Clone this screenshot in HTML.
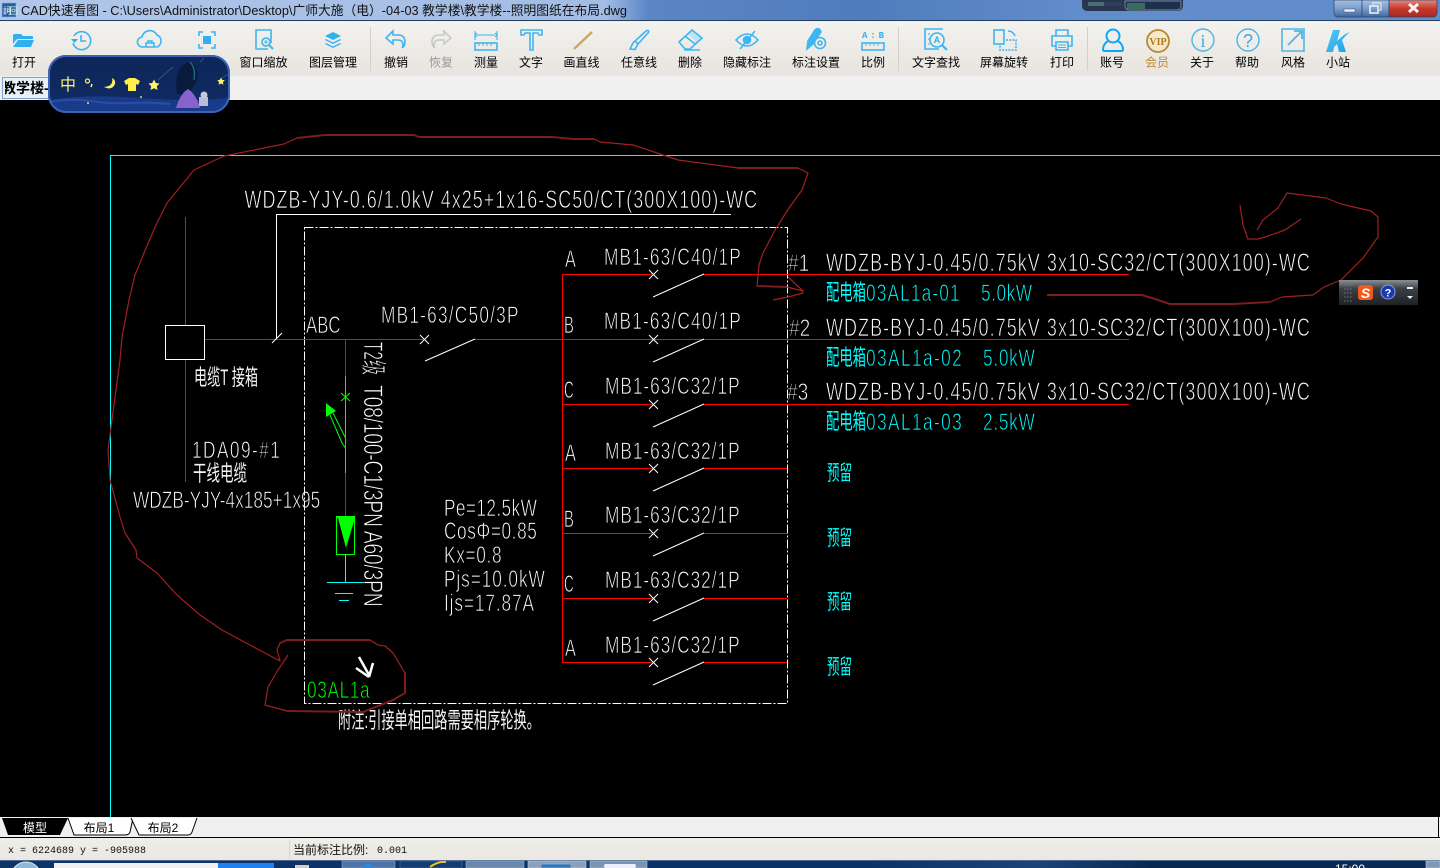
<!DOCTYPE html>
<html lang="zh"><head><meta charset="utf-8"><title>CAD快速看图</title>
<style>
html,body{margin:0;padding:0;background:#000;width:1440px;height:868px;overflow:hidden}
svg{display:block}
text{font-family:"Liberation Sans","Noto Sans CJK SC",sans-serif}
.l{font-size:12px;text-anchor:middle;fill:#000}
.c{font-size:24px;fill:#fff;stroke:#000;stroke-width:.75}
.t{font-size:25px}
.b{fill:#0ff}
.z{font-size:22px;fill:#f4f4f4}
.y{font-size:21px;fill:#0ff}
.i{fill:none;stroke:#3db5f0;stroke-width:1.6}
.f{fill:#2fb0f0;stroke:none}
.w{fill:none;stroke:#fff;stroke-width:1}
.r{fill:none;stroke:#f00;stroke-width:1}
.h{fill:none;stroke:#a02020;stroke-width:1.2;stroke-linejoin:round}
.h2{fill:none;stroke:#7c1c1c;stroke-width:2;stroke-linejoin:round}
</style></head><body>
<svg width="1440" height="868" viewBox="0 0 1440 868" xmlns="http://www.w3.org/2000/svg">
<defs>
<linearGradient id="tb" x1="0" y1="0" x2="0" y2="1"><stop offset="0" stop-color="#f3f2ee"/><stop offset="1" stop-color="#e8e4df"/></linearGradient>
<linearGradient id="st" x1="0" y1="0" x2="0" y2="1"><stop offset="0" stop-color="#efeee9"/><stop offset="1" stop-color="#ebe7e3"/></linearGradient>
<linearGradient id="title" x1="0" y1="0" x2="1" y2="0"><stop offset="0" stop-color="#b0c6ea"/><stop offset=".42" stop-color="#a3bce4"/><stop offset=".45" stop-color="#5b86c6"/><stop offset=".6" stop-color="#4f7cbc"/><stop offset=".75" stop-color="#628dcb"/><stop offset="1" stop-color="#5f8ccb"/></linearGradient>
<linearGradient id="task" x1="0" y1="0" x2="1" y2="0"><stop offset="0" stop-color="#0c3468"/><stop offset=".6" stop-color="#0a3268"/><stop offset=".72" stop-color="#1c4478"/><stop offset=".8" stop-color="#08284f"/><stop offset="1" stop-color="#0a2a55"/></linearGradient>
<linearGradient id="close" x1="0" y1="0" x2="0" y2="1"><stop offset="0" stop-color="#e08a80"/><stop offset=".5" stop-color="#c8382c"/><stop offset="1" stop-color="#a82a20"/></linearGradient>
<linearGradient id="btn" x1="0" y1="0" x2="0" y2="1"><stop offset="0" stop-color="#a8c0e0"/><stop offset=".5" stop-color="#7c9ccc"/><stop offset="1" stop-color="#40689c"/></linearGradient>
<linearGradient id="sky" x1="0" y1="0" x2="0" y2="1"><stop offset="0" stop-color="#0e2658"/><stop offset=".7" stop-color="#0f2a60"/><stop offset="1" stop-color="#122f6c"/></linearGradient>
<linearGradient id="sg" x1="0" y1="0" x2="0" y2="1"><stop offset="0" stop-color="#8a9096"/><stop offset=".35" stop-color="#3a4046"/><stop offset="1" stop-color="#1e2226"/></linearGradient>
<linearGradient id="kk" x1="0" y1="0" x2="1" y2="1"><stop offset="0" stop-color="#55c8f5"/><stop offset="1" stop-color="#1a9fe5"/></linearGradient>
<clipPath id="tabclip"><rect x="5" y="77" width="44" height="23"/></clipPath>
<clipPath id="skin"><rect x="48" y="55" width="182" height="58" rx="18"/></clipPath>
</defs>

<!-- canvas -->
<rect width="1440" height="868" fill="#000"/>

<!-- title bar -->
<rect x="0" y="0" width="1440" height="20" fill="url(#title)"/>
<rect x="0" y="20" width="1440" height="1" fill="#26405f"/>
<rect x="0" y="21" width="1440" height="1" fill="#e8eef6"/>
<rect x="2" y="3" width="14" height="14" fill="#2b5c9c" stroke="#8fb0d8" stroke-width=".6"/>
<text x="3" y="14" font-size="9" fill="#fff">訶</text><text x="9" y="14" font-size="9" fill="#cfe">回</text>
<text x="21" y="15" font-size="13" fill="#111" textLength="606" lengthAdjust="spacingAndGlyphs">CAD快速看图 - C:\Users\Administrator\Desktop\广师大施（电）-04-03 教学楼\教学楼--照明图纸在布局.dwg</text>
<!-- tray widget -->
<path d="M1082 0H1183V6a5 5 0 0 1-5 5H1087a5 5 0 0 1-5-5z" fill="#28364f"/>
<path d="M1125 1h56v5a4 4 0 0 1-4 4h-48a4 4 0 0 1-4-4z" fill="#1e3050" stroke="#8aa4c8" stroke-width=".7"/>
<path d="M1089 2v4M1091 2v4M1093 2v4M1095 2v4M1097 2v4M1099 2v4M1101 2v4M1103 2v4" stroke="#7fd8c8" stroke-width=".7"/>
<path d="M1105 2v4M1107 2v4M1109 2v4M1111 2v4M1113 2v4M1115 2v4M1117 2v4M1119 2v4M1121 2v4" stroke="#3f506c" stroke-width=".7"/>
<path d="M1128 3v6M1130 3v6M1132 3v6M1134 3v6M1136 3v6M1138 3v6M1140 3v6M1142 3v6M1144 3v6" stroke="#6fdc78" stroke-width=".7"/>
<!-- window buttons -->
<path d="M1334 0H1362V17H1338a4 4 0 0 1-4-4z" fill="url(#btn)" stroke="#2c4468" stroke-width=".7"/>
<rect x="1362" y="0" width="27" height="17" fill="url(#btn)" stroke="#2c4468" stroke-width=".7"/>
<path d="M1389 0H1437V13a4 4 0 0 1-4 4H1389z" fill="url(#close)" stroke="#2c4468" stroke-width=".7"/>
<rect x="1344" y="9" width="11" height="3" fill="#eef" stroke="#44556f" stroke-width=".5"/>
<rect x="1370" y="6" width="8" height="7" fill="none" stroke="#e8eef8" stroke-width="1.6"/><path d="M1373 5V3h8v7h-2" fill="none" stroke="#dde6f4" stroke-width="1.2"/>
<path d="M1409 4l9 8M1418 4l-9 8" stroke="#f6f0ee" stroke-width="3"/>

<!-- toolbar -->
<rect x="0" y="22" width="1440" height="54" fill="url(#tb)"/>
<rect x="0" y="76" width="1440" height="24" fill="#f0f0f0"/>
<path d="M370.500 27V71M898.500 27V71M1087.500 27V71" stroke="#d2d0cc"/>

<!-- labels -->
<g>
<text class="l" x="24" y="66.500">打开</text>
<text class="l" x="263.500" y="66.500">窗口缩放</text>
<text class="l" x="333" y="66.500">图层管理</text>
<text class="l" x="396" y="66.500">撤销</text>
<text class="l" x="441" y="66.500" style="fill:#999">恢复</text>
<text class="l" x="486" y="66.500">测量</text>
<text class="l" x="531" y="66.500">文字</text>
<text class="l" x="581.500" y="66.500">画直线</text>
<text class="l" x="639" y="66.500">任意线</text>
<text class="l" x="690" y="66.500">删除</text>
<text class="l" x="747" y="66.500">隐藏标注</text>
<text class="l" x="816" y="66.500">标注设置</text>
<text class="l" x="873" y="66.500">比例</text>
<text class="l" x="936" y="66.500">文字查找</text>
<text class="l" x="1004" y="66.500">屏幕旋转</text>
<text class="l" x="1062" y="66.500">打印</text>
<text class="l" x="1112" y="66.500">账号</text>
<text class="l" x="1157" y="66.500" style="fill:#c08a2c">会员</text>
<text class="l" x="1202" y="66.500">关于</text>
<text class="l" x="1247" y="66.500">帮助</text>
<text class="l" x="1293" y="66.500">风格</text>
<text class="l" x="1338" y="66.500">小站</text>
</g>

<!-- icons -->
<path class="f" d="M13 36q0-2 2-2h6l2 2h9q1 0 1 1v2H18q-1 0-2 1l-3 4zM18 40h16l-3 7H13z"/>
<g class="i"><path d="M74 36a9 9 0 1 1-1 7"/><path d="M81 35v6h5"/></g><path class="f" d="M71 39h7l-3.500 4z"/>
<g class="i" stroke-width="1.8"><path d="M145 47h-2a5 5 0 0 1-1-10 8 8 0 0 1 15-2 6.500 6.500 0 0 1 0 12h-2"/><path d="M146 47v-4h8v4zM148 43v-2h4v2"/></g>
<g class="i"><path d="M199 36v-4h4M211 32h4v4M215 44v4h-4M203 48h-4v-4"/></g><rect x="203" y="36" width="8" height="8" fill="#2fb0f0"/>
<g class="i"><path d="M271 43V30h-15v19h12"/><circle cx="266" cy="42" r="4"/><path d="M269 45l4 4" stroke-width="2"/><path d="M264 42h4M266 40v4" stroke-width="1"/></g>
<path class="f" d="M333 32l8 4-8 4-8-4z"/><path class="f" d="M326 39l7 3.500 7-3.500 1 1-8 4-8-4z"/><path class="f" d="M326 43l7 3.500 7-3.500 1 1-8 4-8-4z"/>
<g class="i"><path d="M393 31l-7 7 7 6v-4h5q5 0 5 5 0 2-1 3 3-2 3-6 0-7-7-7h-5z"/></g>
<g fill="none" stroke="#c8c8c8" stroke-width="1.6"><path d="M444 31l7 7-7 6v-4h-5q-5 0-5 5 0 2 1 3-3-2-3-6 0-7 7-7h5z"/></g>
<g class="i" stroke-width="1.3"><path d="M475 31v9M497 31v9M477 35h18M495 33l2 2-2 2M477 33l-2 2 2 2" stroke-width="1.1"/><rect x="475" y="43" width="22" height="7"/><path d="M479 43v3M483 43v3M487 43v3M491 43v3" stroke-width="1"/></g>
<g class="i"><path d="M521 35v-5h21v5h-3l-1-2h-5v17h-3V33h-5l-1 2z"/></g>
<path d="M574 49l18-17" stroke="#c9a860" stroke-width="2.4"/>
<g class="i"><path d="M638 44l10-11q1.500-2 0-2.500-1-.5-2.500 1L635 41zM635 41l-2 2-3 6 5 .5 3-5.500"/></g>
<path d="M688 34l5-4 9 8-5 5z" fill="#bfe4f8"/>
<g class="i"><path d="M679 42l13-12 10 8-12 11h-5zM685 36l10 8M684 50h16"/></g>
<g class="i" stroke-width="1.8"><path d="M736 40q11-12 22 0-11 12-22 0z"/><circle cx="747" cy="40" r="3.500" fill="#3db5f0"/><path d="M740 49l15-18"/></g>
<g class="i"><path d="M815 30q3-3 5 0l1 2-8 12-6 5 1-8z" fill="#3db5f0"/><circle cx="820" cy="43" r="5.500" fill="#f0eeea"/><circle cx="820" cy="43" r="2"/></g>
<text x="862" y="38" font-size="9" font-weight="700" fill="#2fb0f0" textLength="22" style="font-family:'Liberation Mono',monospace">A:B</text>
<g class="i" stroke-width="1.2"><rect x="862" y="43" width="22" height="7"/><path d="M866 43v3M870 43v3M874 43v3M878 43v3" stroke-width="1"/></g>
<g class="i"><path d="M943 29H925v20h14"/><circle cx="937" cy="40" r="7"/><path d="M942 45l5 5" stroke-width="2.2"/><path d="M928 34h2M928 39h2M928 44h2" stroke-width="1"/></g>
<text x="937" y="43" font-size="9" font-weight="700" fill="#2fb0f0" text-anchor="middle">A</text>
<g class="i"><rect x="994" y="30" width="10" height="14"/><path d="M1006 40h10v10h-16v-5" stroke-dasharray="2 1.200"/><path d="M1008 31q5 0 7 5"/></g>
<g class="i" stroke-width="1.8"><path d="M1056 36v-6h12v6"/><path d="M1056 46h-4V36h20v10h-4"/><path d="M1056 42h12v8h-12z"/><path d="M1058 45h8M1058 47.500h8" stroke-width="1"/></g>
<g fill="none" stroke="#0aa8f8" stroke-width="2"><circle cx="1113" cy="36" r="6.500"/><path d="M1108 41q-5 3-5 9 0 1 2 1h16q2 0 2-1 0-6-5-9"/></g>
<circle cx="1158" cy="41" r="11" fill="#f4e8c8" stroke="#b5873a" stroke-width="1.8"/>
<text x="1158" y="45" font-size="10" font-weight="700" text-anchor="middle" fill="#b07a1c" style="font-family:'Liberation Serif',serif">VIP</text>
<circle cx="1203" cy="40" r="11" fill="none" stroke="#4fb5e6" stroke-width="1.4"/>
<text x="1203" y="47" font-size="18" text-anchor="middle" fill="#3aa8e0" style="font-family:'Liberation Serif',serif">i</text>
<circle cx="1248" cy="40" r="11" fill="none" stroke="#4fb5e6" stroke-width="1.4"/>
<text x="1248" y="47" font-size="18" text-anchor="middle" fill="#3aa8e0">?</text>
<g fill="none" stroke="#4fb5e6" stroke-width="1.6"><path d="M1293 29h11v22h-22V38"/><path d="M1282 38V29h11"/><path d="M1288 45l13-13M1294 31h8v8" stroke-width="1.800"/></g>
<path d="M1333 30h7l-3 11 7-6q3-2 6-3-4 3-8 8l4 12h-7l-2-8-3 3-1 5h-7z" fill="url(#kk)"/>

<!-- document tab -->
<rect x="2.500" y="77.500" width="46" height="21" fill="#e8f0f8" stroke="#7fa4d4"/>
<g clip-path="url(#tabclip)"><text x="2" y="93" font-size="14" font-weight="700" fill="#000">教学楼--照明</text></g>

<!-- CAD: text -->
<g>
<text class="c t" transform="translate(244.500 208) scale(.72 1)" textLength="712" lengthAdjust="spacing">WDZB-YJY-0.6/1.0kV 4x25+1x16-SC50/CT(300X100)-WC</text>

<text class="c t" transform="translate(826 271) scale(.72 1)" textLength="672" lengthAdjust="spacing">WDZB-BYJ-0.45/0.75kV 3x10-SC32/CT(300X100)-WC</text>
<text class="c t" transform="translate(826 336) scale(.72 1)" textLength="672" lengthAdjust="spacing">WDZB-BYJ-0.45/0.75kV 3x10-SC32/CT(300X100)-WC</text>
<text class="c t" transform="translate(826 400) scale(.72 1)" textLength="672" lengthAdjust="spacing">WDZB-BYJ-0.45/0.75kV 3x10-SC32/CT(300X100)-WC</text>
<text class="c" transform="translate(788 271) scale(.8 1)">#1</text>
<text class="c" transform="translate(789 336) scale(.8 1)">#2</text>
<text class="c" transform="translate(787 400) scale(.8 1)">#3</text>

<text class="y" x="826" y="300" textLength="40" lengthAdjust="spacingAndGlyphs" style="font-size:22px">配电箱</text>
<text class="c b" transform="translate(866 301) scale(.72 1)" textLength="130" lengthAdjust="spacing">03AL1a-01</text>
<text class="c b" transform="translate(981 301) scale(.72 1)" textLength="71" lengthAdjust="spacing">5.0kW</text>
<text class="y" x="826" y="365" textLength="40" lengthAdjust="spacingAndGlyphs" style="font-size:22px">配电箱</text>
<text class="c b" transform="translate(866 366) scale(.72 1)" textLength="133" lengthAdjust="spacing">03AL1a-02</text>
<text class="c b" transform="translate(983 366) scale(.72 1)" textLength="72" lengthAdjust="spacing">5.0kW</text>
<text class="y" x="826" y="429" textLength="40" lengthAdjust="spacingAndGlyphs" style="font-size:22px">配电箱</text>
<text class="c b" transform="translate(866 430) scale(.72 1)" textLength="133" lengthAdjust="spacing">03AL1a-03</text>
<text class="c b" transform="translate(983 430) scale(.72 1)" textLength="72" lengthAdjust="spacing">2.5kW</text>

<text class="y" x="827" y="480" textLength="25" lengthAdjust="spacingAndGlyphs">预留</text>
<text class="y" x="827" y="545" textLength="25" lengthAdjust="spacingAndGlyphs">预留</text>
<text class="y" x="827" y="609" textLength="25" lengthAdjust="spacingAndGlyphs">预留</text>
<text class="y" x="827" y="674" textLength="25" lengthAdjust="spacingAndGlyphs">预留</text>

<text class="c" transform="translate(604 265) scale(.72 1)" textLength="190" lengthAdjust="spacing">MB1-63/C40/1P</text>
<text class="c" transform="translate(604 329) scale(.72 1)" textLength="190" lengthAdjust="spacing">MB1-63/C40/1P</text>
<text class="c" transform="translate(605 394) scale(.72 1)" textLength="187" lengthAdjust="spacing">MB1-63/C32/1P</text>
<text class="c" transform="translate(605 459) scale(.72 1)" textLength="187" lengthAdjust="spacing">MB1-63/C32/1P</text>
<text class="c" transform="translate(605 523) scale(.72 1)" textLength="187" lengthAdjust="spacing">MB1-63/C32/1P</text>
<text class="c" transform="translate(605 588) scale(.72 1)" textLength="187" lengthAdjust="spacing">MB1-63/C32/1P</text>
<text class="c" transform="translate(605 653) scale(.72 1)" textLength="187" lengthAdjust="spacing">MB1-63/C32/1P</text>
<text class="c" transform="translate(565 267) scale(.68 1)">A</text>
<text class="c" transform="translate(564 333) scale(.62 1)">B</text>
<text class="c" transform="translate(564 398) scale(.56 1)">C</text>
<text class="c" transform="translate(565 461) scale(.68 1)">A</text>
<text class="c" transform="translate(564 527) scale(.62 1)">B</text>
<text class="c" transform="translate(564 592) scale(.56 1)">C</text>
<text class="c" transform="translate(565 656) scale(.68 1)">A</text>

<text class="c" transform="translate(306 333) scale(.7 1)">ABC</text>
<text class="c" transform="translate(381 323) scale(.72 1)" textLength="191" lengthAdjust="spacing">MB1-63/C50/3P</text>
<text class="z" x="194" y="385" textLength="64" lengthAdjust="spacingAndGlyphs">电缆T 接箱</text>
<text class="c" transform="translate(192 458) scale(.72 1)" textLength="122" lengthAdjust="spacing">1DA09-#1</text>
<text class="z" x="193" y="481" textLength="54" lengthAdjust="spacingAndGlyphs">干线电缆</text>
<text class="c" transform="translate(133 508) scale(.72 1)" textLength="260" lengthAdjust="spacing">WDZB-YJY-4x185+1x95</text>

<text class="c" transform="translate(364 342) rotate(90) scale(.72 1)" textLength="46" lengthAdjust="spacingAndGlyphs" style="font-size:27px">T2级</text>
<text class="c" transform="translate(364 385) rotate(90) scale(.72 1)" textLength="308" lengthAdjust="spacing" style="font-size:27px">T08/100-C1/3PN A60/3PN</text>

<text class="c" transform="translate(444 516) scale(.72 1)" textLength="129" lengthAdjust="spacing">Pe=12.5kW</text>
<text class="c" transform="translate(444 539) scale(.72 1)" textLength="129" lengthAdjust="spacing">CosΦ=0.85</text>
<text class="c" transform="translate(444 563) scale(.72 1)" textLength="80" lengthAdjust="spacing">Kx=0.8</text>
<text class="c" transform="translate(444 587) scale(.72 1)" textLength="140" lengthAdjust="spacing">Pjs=10.0kW</text>
<text class="c" transform="translate(444 611) scale(.72 1)" textLength="125" lengthAdjust="spacing">Ijs=17.87A</text>

<text class="c" transform="translate(307 698) scale(.72 1)" textLength="87" lengthAdjust="spacing" style="fill:#0f0">03AL1a</text>
<text class="z" x="338" y="728" textLength="202" lengthAdjust="spacingAndGlyphs">附注:引接单相回路需要相序轮换。</text>
</g>

<!-- CAD: lines -->
<path d="M110.500 817V155.500H1440" fill="none" stroke="#0ff"/>
<path d="M304.500 227.500H787.500V703.500H304.500Z" fill="none" stroke="#fff" stroke-dasharray="9 2 2 2"/>
<path class="r" style="stroke:#d01818" d="M185.500 217V325M185.500 360V482M205 339.500H424M475 339.500H1129M345.500 339.500V376"/>
<path class="r" d="M345.500 448V473M345.500 473V516"/>
<rect x="165.500" y="325.500" width="39" height="34" class="w"/>
<path class="w" d="M731 214.500H276.500V339M272 343l10-10M420 335l9 9M429 335l-9 9M425 361l50-22"/>
<path d="M345.500 376V473" stroke="#0f0" fill="none"/>
<path d="M341 393l9 8M350 393l-9 8" stroke="#0f0" fill="none"/>
<path d="M333 413l12.500 25M330 415l12 28 3.500 5" stroke="#0f0" fill="none"/>
<path d="M326 403v14l10-6z" fill="#0f0"/>
<rect x="336.500" y="516.500" width="18" height="38" fill="none" stroke="#0f0"/>
<path d="M336 516h19v2l-9 30-8-30h-2z" fill="#0f0"/>
<path d="M345.500 554V582M327 582.500H364M335 593.500H353M339 600.500H349" stroke="#0ff" fill="none"/>

<path class="r" d="M562.500 274V663"/>
<path class="r" d="M563 274.500H652M704 274.500H1129M563 404.500H652M704 404.500H1129M563 468.500H652M704 468.500H787M563 598.500H652M704 598.500H787M563 662.500H652M704 662.500H787"/>
<path class="r" style="stroke:#d01818" d="M563 533.500H652M704 533.500H787"/>
<path class="w" d="M649 270l9 9M658 270l-9 9M653 297l51-23
M649 335l9 9M658 335l-9 9M653 362l51-23
M649 400l9 9M658 400l-9 9M653 427l51-23
M649 464l9 9M658 464l-9 9M653 491l51-23
M649 529l9 9M658 529l-9 9M653 556l51-23
M649 594l9 9M658 594l-9 9M653 621l51-23
M649 658l9 9M658 658l-9 9M653 685l51-23"/>
<path d="M359 657l10 18M356 668l13 9M373 663l-4 14" stroke="#fff" stroke-width="2.5" fill="none"/>

<!-- hand-drawn annotations -->
<path class="h" d="M773 300L788 297L803 293L803 291L788 277M803 291L787 287L757 286L759 265L763 253L775 230L789 208L802 190L808 173L798 168L738 168L678 160L633 145L600 142L594 139L573 139L552 137L419 137L414 135L325 135L297 138L284 144L224 156L194 170L167 203L155 227L146 248L135 275L129 300L122 337L120 360L112 420L108 450L110 480L120 517L125 533L136 550L137 558L157 573L177 595L200 615L222 630L250 645L280 661L277 650L280 643L287 640L370 640L378 645L385 646L393 653L405 673L405 693L393 700L363 712L287 711L265 705L268 687L278 670L288 655"/>
<path class="h2" d="M297 138L325 135L414 135L419 137L552 137L573 139L594 139M738 168L798 168M757 286L787 287M280 643L287 640L370 640M405 673L405 693L393 700L363 712L287 711"/>
<path class="h" d="M1142 295L1155 299L1170 304M1270 302L1282 297L1313 295L1324 287L1341 280L1363 258L1378 237V217L1371 211L1341 204L1326 198L1287 193L1278 208L1263 220L1257 230"/>
<path class="h2" d="M1047 295H1142L1155 299L1170 304H1233L1270 302"/>
<path class="h" d="M1240 205L1243 225L1248 239H1258L1265 237L1285 230L1301 219"/>

<!-- sogou ime -->
<rect x="1339" y="280" width="79" height="25" fill="url(#sg)"/>
<path d="M1344 285h8M1344 289h8M1344 293h8M1344 297h8M1344 301h8" stroke="#777" stroke-dasharray="1.500 1.500"/>
<rect x="1358" y="285" width="15" height="15" rx="3" fill="#f05a1c"/>
<text x="1365.500" y="298" font-size="14" font-weight="700" font-style="italic" text-anchor="middle" fill="#fff">S</text>
<circle cx="1388" cy="292" r="7" fill="#1a38b0" stroke="#8aa0e0"/>
<text x="1388" y="296.500" font-size="11" font-weight="700" text-anchor="middle" fill="#fff">?</text>
<rect x="1407" y="287" width="6" height="2" fill="#eee"/><path d="M1407 296h6l-3 3z" fill="#eee"/>

<!-- skin panel -->
<g clip-path="url(#skin)">
<rect x="48" y="55" width="182" height="58" fill="url(#sky)"/>
<path d="M48 100q40-6 90-2t92 0v15H48z" fill="#1a3f94" opacity=".8"/>
<path d="M50 102q20-4 40-1t40 2 40 1" stroke="#3a62c0" stroke-width="2" fill="none" opacity=".5"/>
<path d="M158 80l15-13M200 62l4-4M222 78l8-5" stroke="#6080c0" stroke-width=".7" opacity=".7"/>
<path d="M177 94q-3-18 5-28 8-7 13 0 5 9 0 18l-6 10z" fill="#0a1a3c"/>
<path d="M190 62q6 6 4 18" stroke="#1c6a80" stroke-width="1.500" fill="none"/>
<path d="M176 108q4-14 12-19 8 5 12 19z" fill="#8a62cc"/>
<path d="M199 97h9v9h-9z" fill="#b8bcd4"/><circle cx="204" cy="95" r="3.500" fill="#c4c8dc"/>
<circle cx="141" cy="97" r="1" fill="#ffd060"/><circle cx="88" cy="103" r="1" fill="#ffd060"/>
</g>
<rect x="49" y="56" width="180" height="56" rx="17" fill="none" stroke="#3d64b4" stroke-width="2"/>
<text x="60" y="90" font-size="16" fill="#fff06a">中</text>
<circle cx="87.500" cy="81" r="2" fill="none" stroke="#fff06a" stroke-width="1.200"/><path d="M92 84l-1 3" stroke="#fff06a" stroke-width="1.500"/>
<path d="M112 78q2 8-8 9 8 4 11-3 1-4-3-6z" fill="#fff06a"/>
<path d="M124 81l5-3h6l5 3-2 4-2-1v7h-8v-7l-2 1z" fill="#fff04a"/>
<path d="M154 79.500l1.800 3.500 3.700.5-2.700 2.700.7 3.800-3.500-1.800-3.500 1.800.7-3.800-2.700-2.700 3.700-.5z" fill="#fff06a"/>
<path d="M221 77.500l1.200 2.400 2.600.4-1.900 1.800.5 2.600-2.400-1.200-2.400 1.200.5-2.600-1.900-1.800 2.600-.4z" fill="#fff06a"/>

<!-- layout tabs -->
<rect x="0" y="817" width="1440" height="20" fill="#f0f0f0"/>
<rect x="0" y="837" width="1440" height="1" fill="#000"/>
<rect x="1438" y="817" width="1" height="21" fill="#000"/>
<path d="M2 818L8 835H60L68 818z" fill="#000"/>
<path d="M68 818L74 835H125q4 0 5-3L133 818" fill="#fff" stroke="#000"/>
<path d="M131 818L139 835H188q3 0 4-3L197 818" fill="#fff" stroke="#000"/>
<text x="35" y="832" font-size="12" fill="#fff" text-anchor="middle">模型</text>
<text x="99" y="832" font-size="12" fill="#000" text-anchor="middle">布局1</text>
<text x="163" y="832" font-size="12" fill="#000" text-anchor="middle">布局2</text>

<!-- status bar -->
<rect x="0" y="838" width="1440" height="22" fill="url(#st)"/>
<rect x="289" y="839" width="1" height="20" fill="#d8d6d2"/>
<text x="8" y="853" font-size="10" fill="#111" style="font-family:'Liberation Mono',monospace">x = 6224689 y = -905988</text>
<text x="293" y="854" font-size="12" fill="#111">当前标注比例:</text>
<text x="377" y="853" font-size="10" fill="#111" style="font-family:'Liberation Mono',monospace">0.001</text>

<!-- taskbar -->
<rect x="0" y="860" width="1440" height="8" fill="url(#task)"/>
<rect x="0" y="860" width="1440" height="1" fill="#4a6a94"/>
<circle cx="26" cy="877" r="15" fill="#8fb8d8" stroke="#dfeaf4"/>
<rect x="54" y="863" width="164" height="5" fill="#f0f0f0"/>
<rect x="218" y="863" width="56" height="5" fill="#2080f0"/>
<rect x="295" y="865" width="14" height="3" fill="#d8d0c0"/>
<rect x="342" y="861" width="53" height="7" fill="#4c74a8" stroke="#8aa8cc" stroke-width=".6"/>
<circle cx="368" cy="870" r="6" fill="#2a88e0"/>
<rect x="400" y="861" width="62" height="7" fill="#123c74" stroke="#5a7ca4" stroke-width=".5"/>
<path d="M430 867q8-6 16-5" stroke="#f0c030" stroke-width="2" fill="none"/>
<rect x="466" y="861" width="58" height="7" fill="#6a88ac" stroke="#9ab0cc" stroke-width=".6"/>
<rect x="528" y="861" width="58" height="7" fill="#8aa0bc" stroke="#c0d0e0" stroke-width=".6"/>
<rect x="541" y="864" width="30" height="4" fill="#2878c8" stroke="#aaa" stroke-width=".8"/>
<rect x="590" y="861" width="57" height="7" fill="#7c94b4" stroke="#aec0d4" stroke-width=".6"/>
<rect x="604" y="864" width="32" height="4" rx="2" fill="#eef"/>
<text x="1335" y="873" font-size="12" fill="#fff">15:00</text>
<rect x="1426" y="861" width="14" height="7" fill="#7f98b8" stroke="#c4d2e2" stroke-width=".6"/>
</svg>
</body></html>
